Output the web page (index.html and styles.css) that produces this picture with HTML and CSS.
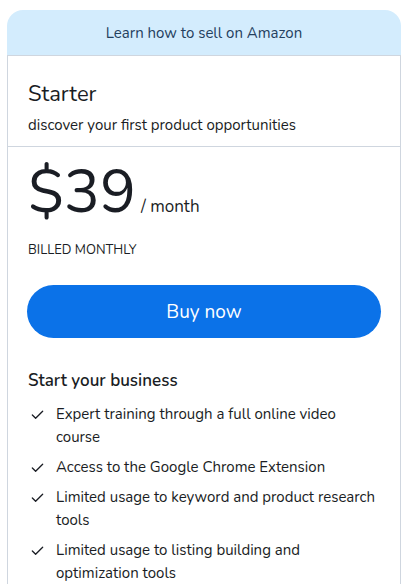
FILE: index.html
```html
<!DOCTYPE html>
<html lang="en">
<head>
<meta charset="utf-8">
<title>Starter plan</title>
<link rel="stylesheet" href="styles.css">
</head>
<body>
<div class="page">
  <div class="plan">
    <div class="plan-banner">Learn how to sell on Amazon</div>
    <div class="plan-card">
      <div class="plan-head">
        <h2 class="plan-name">Starter</h2>
        <p class="plan-desc">discover your first product opportunities</p>
      </div>
      <div class="plan-body">
        <div class="price">
          <span class="price-amount">$39</span>
          <span class="price-period">/ month</span>
        </div>
        <div class="billing">BILLED MONTHLY</div>
        <button class="buy">Buy now</button>
        <h3 class="features-title">Start your business</h3>
        <ul class="features">
          <li><svg class="check" viewBox="0 0 16 16"><path d="M2.5 8.5l3.5 3.5 7.5-7.5"/></svg><span>Expert training through a full online video course</span></li>
          <li><svg class="check" viewBox="0 0 16 16"><path d="M2.5 8.5l3.5 3.5 7.5-7.5"/></svg><span>Access to the Google Chrome Extension</span></li>
          <li><svg class="check" viewBox="0 0 16 16"><path d="M2.5 8.5l3.5 3.5 7.5-7.5"/></svg><span>Limited usage to keyword and product research tools</span></li>
          <li><svg class="check" viewBox="0 0 16 16"><path d="M2.5 8.5l3.5 3.5 7.5-7.5"/></svg><span>Limited usage to listing building and optimization tools</span></li>
        </ul>
      </div>
    </div>
  </div>
</div>
</body>
</html>
```
FILE: styles.css
```css
* { box-sizing: border-box; }
html, body { margin: 0; padding: 0; background: #fff; }
body {
  font-family: "Nunito", "Lato", "Noto Sans", sans-serif;
  color: #1a1d24;
}
.page {
  padding: 10px 8px 0 7px;
}
.plan {
  width: 394px;
}
.plan-banner {
  height: 46px;
  background: #d3ecfd;
  border-radius: 16px 16px 0 0;
  border-bottom: 1px solid #cfd6df;
  display: flex;
  align-items: center;
  justify-content: center;
  font-size: 15px;
  color: #24405e;
}
.plan-card {
  border-left: 1px solid #cfd6df;
  border-right: 1px solid #cfd6df;
  padding-bottom: 20px;
}
.plan-head {
  padding: 24px 20px 11px;
  border-bottom: 1px solid #cfd6df;
}
.plan-name {
  margin: 0;
  font-size: 22px;
  font-weight: 400;
  line-height: 28px;
}
.plan-desc {
  margin: 7px 0 0;
  font-size: 15px;
  line-height: 20px;
}
.plan-body {
  padding: 10px 19px 0 19px;
}
.price {
  display: flex;
  align-items: baseline;
  gap: 5px;
  padding-left: 1px;
}
.price-amount {
  font-size: 60px;
  line-height: 70px;
}
.price-period {
  font-size: 17px;
}
.billing {
  margin-top: 15px;
  padding-left: 1px;
  font-size: 13px;
  line-height: 16px;
}
.buy {
  margin-top: 27px;
  width: 354px;
  height: 53px;
  border: none;
  border-radius: 27px;
  background: #0b72e8;
  color: #fff;
  font-family: inherit;
  font-size: 19px;
}
.features-title {
  margin: 32px 0 0;
  padding-left: 1px;
  font-size: 17px;
  font-weight: 600;
  line-height: 22px;
}
.features {
  list-style: none;
  margin: 11px 0 0;
  padding: 0;
  display: flex;
  flex-direction: column;
  gap: 7px;
}
.features li {
  display: flex;
  align-items: flex-start;
  gap: 11px;
  font-size: 15px;
  line-height: 23px;
}
.check {
  flex: none;
  width: 15px;
  height: 15px;
  margin-top: 4px;
  margin-left: 3px;
  fill: none;
  stroke: #1a1d24;
  stroke-width: 1.4;
  stroke-linecap: round;
  stroke-linejoin: round;
}
```
